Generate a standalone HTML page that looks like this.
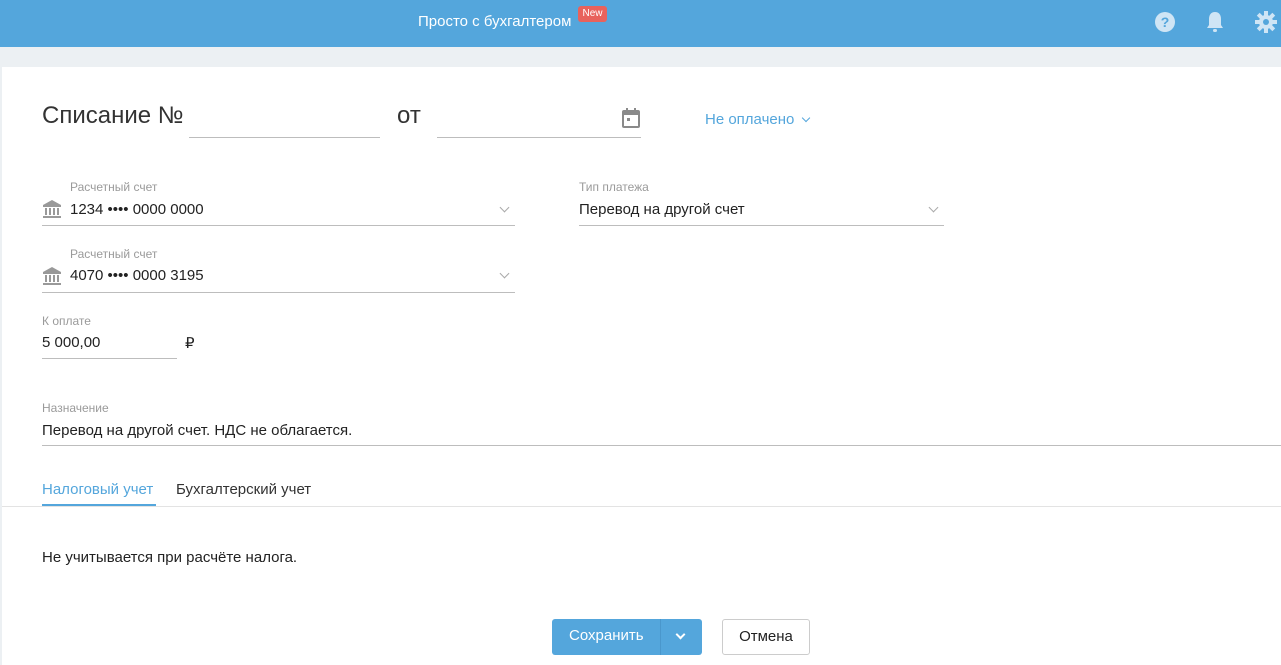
<!DOCTYPE html>
<html><head><meta charset="utf-8"><style>
*{margin:0;padding:0;box-sizing:border-box}
body{width:1281px;height:665px;overflow:hidden;background:#ecf0f3;font-family:"Liberation Sans",Arial,sans-serif;color:#222;position:relative}
.hdr{position:absolute;left:0;top:0;width:1281px;height:47px;background:#54a6dc}
.abs{position:absolute}
.main{position:absolute;left:2px;top:67px;width:1279px;height:598px;background:#fff}
.lbl{position:absolute;font-size:12px;color:#9a9a9a}
.val{position:absolute;font-size:15px;color:#222}
.line{position:absolute;height:1px;background:#bdbdbd}
.chev{position:absolute;width:7px;height:7px;border-right:1.5px solid #aaa;border-bottom:1.5px solid #aaa;transform:rotate(45deg)}
</style></head><body>
<div class="hdr">
  <div class="abs" style="left:418px;top:13px;font-size:15px;color:#fff">Просто с бухгалтером</div>
  <div class="abs" style="left:578px;top:6px;width:29px;height:16px;background:#e8625c;border-radius:3px;color:#fff;font-size:10px;text-align:center;line-height:15px">New</div>
  <svg class="abs" style="left:1154px;top:11px" width="22" height="22" viewBox="0 0 22 22"><circle cx="11" cy="11" r="10" fill="#cfe5f5"/><text x="11" y="16" font-size="14" font-weight="bold" text-anchor="middle" fill="#54a6dc" font-family="Liberation Sans">?</text></svg>
  <svg class="abs" style="left:1205px;top:10px" width="20" height="24" viewBox="0 0 20 24"><path d="M10 2c-4 0-6 3-6 7v6l-2 3h16l-2-3V9c0-4-2-7-6-7z" fill="#cfe5f5"/><rect x="8" y="19" width="4" height="3" rx="1.5" fill="#cfe5f5"/></svg>
  <svg class="abs" style="left:1254px;top:10px" width="24" height="24" viewBox="0 0 24 24"><g fill="#cfe5f5"><circle cx="12" cy="12" r="7"/><rect x="10" y="1" width="4" height="22"/><rect x="1" y="10" width="22" height="4"/><rect x="10" y="1" width="4" height="22" transform="rotate(45 12 12)"/><rect x="10" y="1" width="4" height="22" transform="rotate(-45 12 12)"/></g><circle cx="12" cy="12" r="3" fill="#54a6dc"/></svg>
</div>
<div class="main"></div>

<div class="abs" style="left:42px;top:102px;font-size:24px;color:#333">Списание №</div>
<div class="line" style="left:189px;top:137px;width:191px"></div>
<div class="abs" style="left:397px;top:102px;font-size:24px;color:#333">от</div>
<div class="line" style="left:437px;top:137px;width:204px"></div>
<svg class="abs" style="left:621px;top:107px" width="20" height="22" viewBox="0 0 20 22"><rect x="2" y="4" width="16" height="16" rx="1" fill="none" stroke="#8a8a8a" stroke-width="2"/><rect x="2" y="4" width="16" height="4" fill="#8a8a8a"/><rect x="5" y="1" width="2" height="5" fill="#8a8a8a"/><rect x="13" y="1" width="2" height="5" fill="#8a8a8a"/><rect x="6" y="11" width="3" height="3" fill="#8a8a8a"/></svg>
<div class="abs" style="left:705px;top:111px;font-size:15px;color:#54a6dc">Не оплачено</div>
<div class="chev" style="left:803px;top:115px;border-color:#54a6dc;width:6px;height:6px"></div>

<div class="lbl" style="left:70px;top:180px">Расчетный счет</div>
<svg class="abs" style="left:42px;top:199px" width="20" height="20" viewBox="0 0 20 20"><path d="M10 1L1 6h18z" fill="#999"/><rect x="1" y="6" width="18" height="2" fill="#999"/><rect x="3" y="9" width="2" height="7" fill="#999"/><rect x="7" y="9" width="2" height="7" fill="#999"/><rect x="11" y="9" width="2" height="7" fill="#999"/><rect x="15" y="9" width="2" height="7" fill="#999"/><rect x="1" y="17" width="18" height="2" fill="#999"/></svg>
<div class="val" style="left:70px;top:201px">1234 •••• 0000 0000</div>
<div class="chev" style="left:501px;top:204px"></div>
<div class="line" style="left:42px;top:225px;width:473px"></div>

<div class="lbl" style="left:579px;top:180px">Тип платежа</div>
<div class="val" style="left:579px;top:201px">Перевод на другой счет</div>
<div class="chev" style="left:930px;top:204px"></div>
<div class="line" style="left:579px;top:225px;width:365px"></div>

<div class="lbl" style="left:70px;top:247px">Расчетный счет</div>
<svg class="abs" style="left:42px;top:266px" width="20" height="20" viewBox="0 0 20 20"><path d="M10 1L1 6h18z" fill="#999"/><rect x="1" y="6" width="18" height="2" fill="#999"/><rect x="3" y="9" width="2" height="7" fill="#999"/><rect x="7" y="9" width="2" height="7" fill="#999"/><rect x="11" y="9" width="2" height="7" fill="#999"/><rect x="15" y="9" width="2" height="7" fill="#999"/><rect x="1" y="17" width="18" height="2" fill="#999"/></svg>
<div class="val" style="left:70px;top:267px">4070 •••• 0000 3195</div>
<div class="chev" style="left:501px;top:270px"></div>
<div class="line" style="left:42px;top:292px;width:473px"></div>

<div class="lbl" style="left:42px;top:314px">К оплате</div>
<div class="val" style="left:42px;top:334px">5 000,00</div>
<div class="val" style="left:185px;top:334px">₽</div>
<div class="line" style="left:42px;top:358px;width:135px"></div>

<div class="lbl" style="left:42px;top:401px">Назначение</div>
<div class="val" style="left:42px;top:422px">Перевод на другой счет. НДС не облагается.</div>
<div class="line" style="left:42px;top:445px;width:1239px"></div>

<div class="abs" style="left:42px;top:481px;font-size:15px;color:#54a6dc">Налоговый учет</div>
<div class="abs" style="left:42px;top:504px;width:114px;height:2px;background:#54a6dc"></div>
<div class="abs" style="left:176px;top:481px;font-size:15px;color:#333">Бухгалтерский учет</div>
<div class="abs" style="left:2px;top:506px;width:1279px;height:1px;background:#e3e3e3"></div>

<div class="abs" style="left:42px;top:549px;font-size:15px;color:#222">Не учитывается при расчёте налога.</div>

<div class="abs" style="left:552px;top:619px;width:150px;height:36px;background:#54a6dc;border-radius:3px"></div>
<div class="abs" style="left:660px;top:619px;width:1px;height:36px;background:#4a97cc"></div>
<div class="abs" style="left:569px;top:627px;font-size:15px;color:#fff">Сохранить</div>
<div class="chev" style="left:677px;top:631px;border-color:#fff;border-width:0 2px 2px 0"></div>
<div class="abs" style="left:722px;top:619px;width:88px;height:36px;border:1px solid #ccc;border-radius:3px;background:#fff;font-size:15px;color:#222;text-align:center;line-height:34px">Отмена</div>
</body></html>
